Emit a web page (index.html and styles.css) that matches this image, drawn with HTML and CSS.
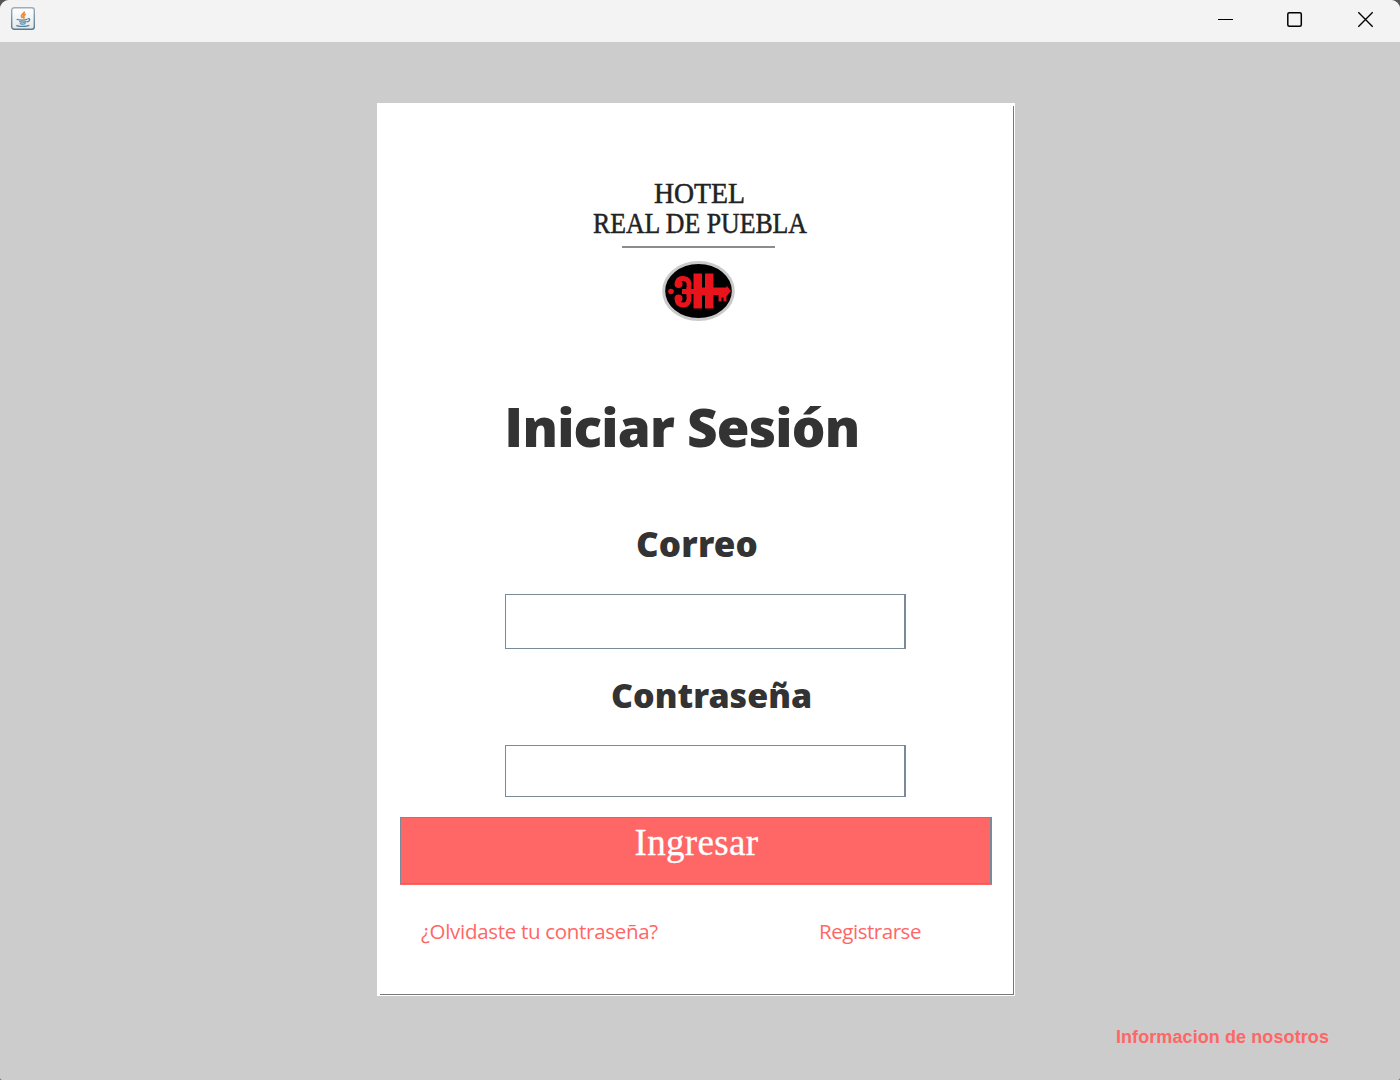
FILE: index.html
```html
<!DOCTYPE html>
<html lang="es">
<head>
<meta charset="utf-8">
<title>Hotel Real de Puebla</title>
<link rel="stylesheet" href="styles.css">
</head>
<body>
<div class="window">
  <header class="titlebar">
    <svg class="app-icon" width="26" height="26" viewBox="0 0 26 26">
      <defs><linearGradient id="tile" x2="0" y2="1"><stop offset="0" stop-color="#fff"/><stop offset="1" stop-color="#e3e8ea"/></linearGradient>
      <linearGradient id="edge" x2="0" y2="1"><stop offset="0" stop-color="#9aaebb"/><stop offset="1" stop-color="#587991"/></linearGradient></defs>
      <rect x="1.7" y="1.7" width="22.6" height="21.6" rx="2.5" fill="url(#tile)" stroke="url(#edge)" stroke-width="1.4"/>
      <path d="M14.300 5.500c.5 2.300-4 2.800-2.700 5l1 1.600M15.800 8.200c-2 .7-2.700 1.700-1.800 3 .3.500-.3 1-.6 1.300" fill="none" stroke="#ee8a35" stroke-width="1.800"/>
      <path d="M6.800 13.200c1 1.200 8.500 1.300 10.500 0M9.300 15.600c1 .8 5.500.8 7.300.1M9.800 17.500c1.500.7 4.200.7 5.800 0M17.600 12.800c3.200-.9 2.400 2.700-.6 3M6.500 19.200c1.500 1.700 10.500 1.600 12.800 0" fill="none" stroke="#5382a1" stroke-width="1.300"/>
    </svg>
    <svg class="controls" width="200" height="42" viewBox="0 0 200 42" fill="none" stroke="#000">
      <path d="M18 19.500h15" stroke-width="1"/>
      <rect x="87.800" y="12.800" width="13.500" height="13.500" rx="1.500" stroke-width="1.500"/>
      <path d="M158.300 12.300l14.400 14.400M172.700 12.300l-14.400 14.400" stroke-width="1.350"/>
    </svg>
  </header>
  <main class="stage">
    <form class="card">
      <svg class="logo" width="240" height="160" viewBox="580 170 240 160" role="img" aria-label="Hotel Real de Puebla">
        <g class="logo-text">
          <text x="654" y="202.500" textLength="91" lengthAdjust="spacingAndGlyphs">HOTEL</text>
          <text x="593" y="233" textLength="214" lengthAdjust="spacingAndGlyphs">REAL DE PUEBLA</text>
        </g>
        <path d="M622 247h153" stroke="#8c8c8c" stroke-width="2"/>
        <ellipse cx="698.500" cy="291" rx="34.800" ry="28.500" fill="#000" stroke="#cacaca" stroke-width="3"/>
        <g fill="#e8131b">
          <circle cx="671" cy="291.500" r="2.800"/>
          <path d="M693.500 273.500h8.500v14h3v-14h8.500v14h13v-2l4.500 5.500-4.500 5.500v5h-3v-4h-2v4h-3v-6.500h-5v13.500H705V295.500h-3v13h-8.500z"/>
          <circle cx="678.500" cy="284" r="4"/><circle cx="678.500" cy="298.500" r="4"/>
        </g>
        <path d="M677.500 283c0-3.500 3-5 6-4.500 5 .5 6 4 5.500 8-.3 2-.5 3-.5 4.500s.2 3 .5 4.500c.6 5-1 9.500-5.500 9.500-4 0-6.500-2-6-6M682 291.500h13" fill="none" stroke="#e8131b" stroke-width="5"/>
      </svg>
      <h1 class="heading"><span class="plain-i">I</span>niciar Sesión</h1>
      <label class="label label-mail" for="correo">Correo</label>
      <input class="field field-mail" id="correo" type="text">
      <label class="label label-pass" for="clave">Contraseña</label>
      <input class="field field-pass" id="clave" type="password">
      <button class="submit" type="button"><span>Ingresar</span></button>
      <nav class="links"><a class="forgot">¿Olvidaste tu contraseña?</a><a class="register">Registrarse</a></nav>
    </form>
    <a class="about">Informacion de nosotros</a>
  </main>
</div>
</body>
</html>
```
FILE: styles.css
```css
* { box-sizing: border-box; }
body { margin: 0; background: #555; }
.window {
  width: 1400px;
  height: 1080px;
  display: flex;
  flex-direction: column;
  background: #ccc;
  border-radius: 9px 9px 2px 2px;
  overflow: hidden;
}
.titlebar {
  flex: none;
  height: 42px;
  display: flex;
  justify-content: space-between;
  background: #f3f3f3;
}
.app-icon { margin: 6px 0 0 10px; }
.stage {
  flex: 1;
  display: flex;
  flex-direction: column;
  padding: 61px 0 0 377px;
}
.card {
  width: 638px;
  height: 893px;
  display: flex;
  flex-direction: column;
  align-items: flex-start;
  padding-top: 67px;
  background:
    linear-gradient(#777, #777) 636px 3px / 1px 889px no-repeat,
    linear-gradient(#777, #777) 3px 891px / 634px 1px no-repeat,
    #fff;
}
.logo { margin-left: 203px; flex: none; overflow: visible; }
.logo-text {
  font: 29px "Liberation Serif", serif;
  fill: #222;
  stroke: #222;
  stroke-width: .5;
}
.heading, .label {
  font-family: "Noto Sans", "Open Sans", sans-serif;
  font-weight: 900;
  color: #333;
  white-space: nowrap;
}
.heading {
  margin: 57px 0 0 129px;
  height: 80px;
  font-size: 53px;
  line-height: 80px;
  letter-spacing: -.8px;
}
.plain-i { font-family: Inter, sans-serif; letter-spacing: 1px; }
.label { height: 50px; font-size: 34px; line-height: 50px; }
.label-mail { margin: 52px 0 0 259px; font-size: 35px; letter-spacing: .15px; }
.label-pass { margin: 21px 0 0 234px; }
.field {
  width: 401px;
  margin: 0 0 0 128px;
  padding: 0 8px;
  background: #fff;
  border: solid #7a8a99;
  border-width: 1px 2px 1px 1px;
  border-radius: 0;
  outline: none;
  font: 20px "Open Sans", sans-serif;
}
.field-mail { height: 55px; margin-top: 25px; }
.field-pass { height: 52px; margin-top: 25px; }
.submit {
  width: 592px;
  height: 67px;
  margin: 20px 0 0 23px;
  padding: 5px 0 0;
  display: flex;
  justify-content: center;
  align-items: flex-start;
  background: #f66;
  border: solid #7a8a99;
  border-width: 1px 2px 1px 1px;
  box-shadow: 0 1px #f66;
  color: #fff;
  font: 37px/40px "Liberation Serif", serif;
  letter-spacing: .35px;
  -webkit-text-stroke: .3px #fff;
}
.submit span { padding-left: 2px; }
.links {
  display: flex;
  justify-content: space-between;
  width: 500px;
  margin: 32px 0 0 44px;
  font: 20.5px/30px "Open Sans", sans-serif;
  letter-spacing: -.3px;
  color: #f66;
  white-space: nowrap;
}
.register { letter-spacing: -.45px; }
.about {
  align-self: flex-end;
  margin: 29px 71px 0 0;
  font: bold 18px/24px "Liberation Sans", sans-serif;
  letter-spacing: .09px;
  color: #f66;
}
```
